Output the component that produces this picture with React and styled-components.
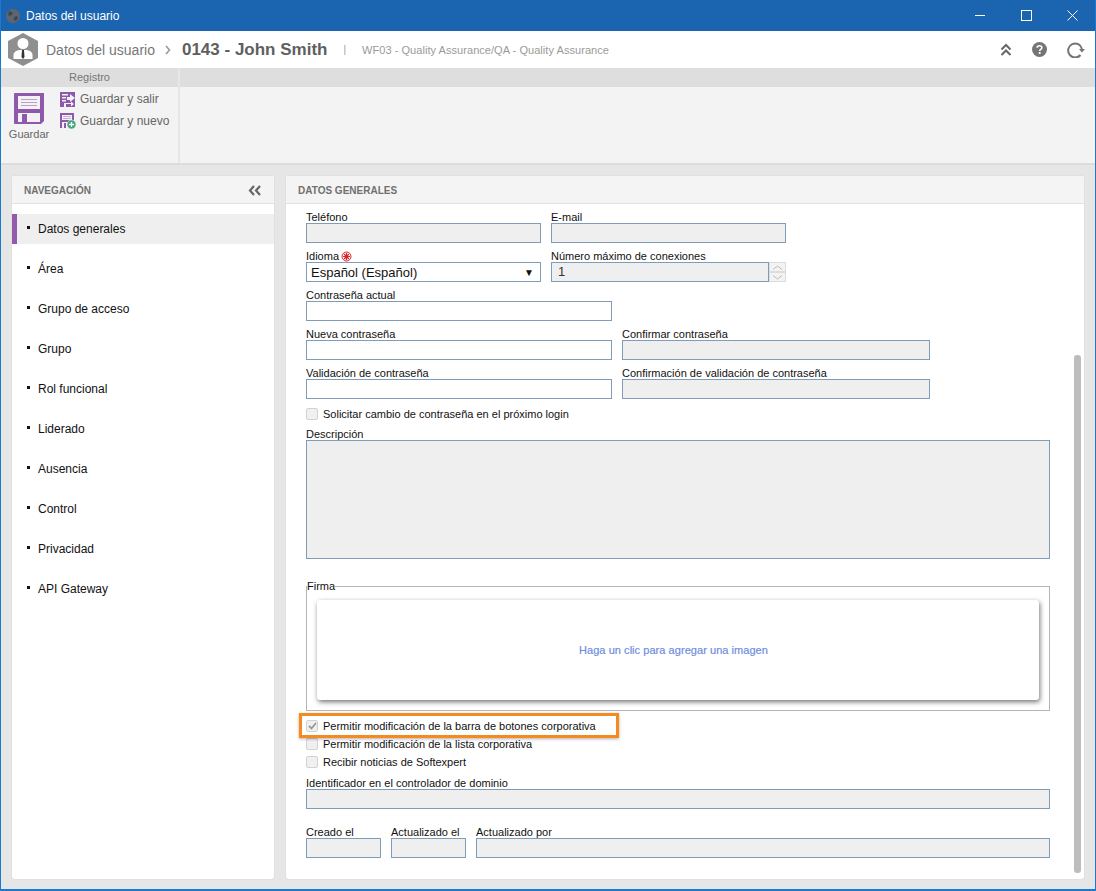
import React from 'react'
import styled, { createGlobalStyle } from 'styled-components'

const GlobalStyle = createGlobalStyle`
    html, body {
        margin: 0;
        padding: 0;
        background: #e6e6e6;
    }
    body {
        font-family: "Liberation Sans", Arial, sans-serif;
        font-size: 11px;
        color: #111;
    }
`

const navItems = ['Datos generales', 'Área', 'Grupo de acceso', 'Grupo', 'Rol funcional', 'Liderado', 'Ausencia', 'Control', 'Privacidad', 'API Gateway']

const SaveIcon = () => (
    <svg width="30" height="31" viewBox="0 0 30 31">
        <path d="M1 0h29v28l-3 3H1a1 1 0 0 1-1-1V1a1 1 0 0 1 1-1z" fill="#8e59ab" />
        <rect x="4" y="3" width="22" height="13" fill="#f4f1f6" />
        <path d="M7 6.500h16M7 9.500h16M7 12.500h16" stroke="#b9a3c9" strokeWidth="1" />
        <rect x="4" y="20" width="22" height="9" fill="#f4f1f6" />
        <rect x="8" y="21" width="5" height="8" fill="#8e59ab" />
    </svg>
)

const SaveExitIcon = () => (
    <svg width="15" height="15" viewBox="0 0 15 15">
        <path d="M0 0h15v15H0z" fill="#8e59ab" />
        <path d="M2 2h6v1.500H2zM2 5h4v1.500H2zM2 8h4v1.500H2z" fill="#f4f1f6" />
        <path d="M7 5h3V2l5 4-5 4V8H7z" fill="#f4f1f6" />
        <path d="M4 15v-4h7v-1.500l3 2.500-3 2.500V12H6v3z" fill="#f4f1f6" />
    </svg>
)

const SaveNewIcon = () => (
    <svg width="15" height="16" viewBox="0 0 15 16" overflow="visible">
        <path d="M0 0h14v15H0z" fill="#8e59ab" />
        <rect x="2" y="2" width="10" height="5" fill="#f4f1f6" />
        <path d="M3 3.500h8M3 5.500h8" stroke="#b9a3c9" strokeWidth="0.800" />
        <rect x="2" y="9" width="8" height="6" fill="#f4f1f6" />
        <rect x="4" y="10" width="2" height="5" fill="#8e59ab" />
        <circle cx="11.500" cy="11.500" r="4.500" fill="#3ea878" stroke="#f3f3f3" strokeWidth="0.600" />
        <path d="M11.500 9v5M9 11.500h5" stroke="#fff" strokeWidth="1.300" />
    </svg>
)

const UserBadge = () => (
    <svg width="30" height="33" viewBox="0 0 30 33">
        <path d="M15 0l15 8v17l-15 8-15-8V8z" fill="#8f8f8f" />
        <circle cx="15" cy="10.500" r="5.500" fill="#fff" />
        <path d="M5.500 26v-4c0-3 3-4.500 6-5h7c3 .5 6 2 6 5v4z" fill="#fff" />
        <path d="M14 17h2l.5 7-1.500 2-1.500-2z" fill="#333" />
    </svg>
)

const App = () => (
    <Frame>
        <GlobalStyle />
        <TitleBar>
            <TitleLeft>
                <svg width="14" height="14" viewBox="0 0 14 14">
                    <circle cx="7" cy="7" r="7" fill="#5d6670" />
                    <path d="M3 2l3 1 1 2-3 2-2-1zM8 8l3-1 1 2-2 3-2-1z" fill="#3f4750" />
                </svg>
                Datos del usuario
            </TitleLeft>
            <WindowButtons>
                <svg width="11" height="11" viewBox="0 0 11 11"><path d="M0 5.500h10" stroke="#fff" strokeWidth="1" /></svg>
                <svg width="11" height="11" viewBox="0 0 11 11"><rect x="0.500" y="0.500" width="10" height="10" fill="none" stroke="#fff" strokeWidth="1" /></svg>
                <svg width="11" height="11" viewBox="0 0 11 11"><path d="M0.500 0.500l10 10M10.500 0.500l-10 10" stroke="#fff" strokeWidth="1" /></svg>
            </WindowButtons>
        </TitleBar>

        <HeaderBar>
            <UserBadge />
            <Crumb>Datos del usuario</Crumb>
            <CrumbArrow>
                <svg width="6" height="10" viewBox="0 0 6 10"><path d="M1 1l3.500 4L1 9" fill="none" stroke="#999" strokeWidth="1.600" /></svg>
            </CrumbArrow>
            <RecordTitle>0143 - John Smith</RecordTitle>
            <Pipe>|</Pipe>
            <RecordPath>WF03 - Quality Assurance/QA - Quality Assurance</RecordPath>
            <HeaderTools>
                <svg width="12" height="14" viewBox="0 0 12 14"><path d="M1.500 6.500L6 2l4.500 4.500M1.500 12L6 7.500l4.500 4.500" fill="none" stroke="#666" strokeWidth="2" /></svg>
                <svg width="15" height="15" viewBox="0 0 16 16">
                    <circle cx="8" cy="8" r="8" fill="#757575" />
                    <path d="M5.500 6.200C5.500 4.600 6.700 4 8 4s2.500.7 2.500 2.100c0 1.800-2.300 1.800-2.300 3.500" fill="none" stroke="#fff" strokeWidth="1.700" />
                    <rect x="7.200" y="10.700" width="2" height="2" fill="#fff" />
                </svg>
                <svg width="18" height="16" viewBox="0 0 18 16">
                    <path d="M13.500 13A7 7 0 1 1 15 7" fill="none" stroke="#757575" strokeWidth="2" />
                    <path d="M12 7h6l-3 3.500z" fill="#757575" />
                </svg>
            </HeaderTools>
        </HeaderBar>

        <Ribbon>
            <RibbonGroup>
                <RibbonGroupTitle>Registro</RibbonGroupTitle>
                <RibbonGroupBody>
                    <BigAction>
                        <SaveIcon />
                        <span>Guardar</span>
                    </BigAction>
                    <SmallActions>
                        <SmallAction><SaveExitIcon />Guardar y salir</SmallAction>
                        <SmallAction><SaveNewIcon />Guardar y nuevo</SmallAction>
                    </SmallActions>
                </RibbonGroupBody>
            </RibbonGroup>
            <RibbonRest>
                <RibbonGroupTitle />
            </RibbonRest>
        </Ribbon>

        <Workspace>
            <NavPanel>
                <PanelHead>
                    <PanelTitle>NAVEGACIÓN</PanelTitle>
                    <svg width="13" height="11" viewBox="0 0 13 11"><path d="M6 1L2 5.500 6 10M12 1L8 5.500l4 4.500" fill="none" stroke="#666" strokeWidth="2.200" /></svg>
                </PanelHead>
                <NavList>
                    {navItems.map((item, i) => (
                        <NavItem key={item} $active={i === 0}>{item}</NavItem>
                    ))}
                </NavList>
            </NavPanel>

            <FormPanel>
                <PanelHead>
                    <PanelTitle>DATOS GENERALES</PanelTitle>
                </PanelHead>
                <FormBody>
                    <Scrollbar />
                    <Row>
                        <Field $w={235}><Label>Teléfono</Label><Input $off /></Field>
                        <Field $w={235}><Label>E-mail</Label><Input $off /></Field>
                    </Row>
                    <Row>
                        <Field $w={235}>
                            <Label>
                                Idioma
                                <svg width="11" height="11" viewBox="0 0 11 11">
                                    <circle cx="5.500" cy="5.500" r="4.500" fill="none" stroke="#d8232a" strokeWidth="1" />
                                    <path d="M5.500 2v7M2 5.500h7M3 3l5 5M8 3l-5 5" stroke="#d8232a" strokeWidth="1.200" />
                                </svg>
                            </Label>
                            <SelectBox>Español (Español)<SelectCaret>▼</SelectCaret></SelectBox>
                        </Field>
                        <Field $w={235}>
                            <Label>Número máximo de conexiones</Label>
                            <SpinRow>
                                <SpinValue>1</SpinValue>
                                <SpinButtons>
                                    <SpinButton><svg width="11" height="5" viewBox="0 0 11 5"><path d="M1 4.500L5.500 1 10 4.500" fill="none" stroke="#bbb" /></svg></SpinButton>
                                    <SpinButton><svg width="11" height="5" viewBox="0 0 11 5"><path d="M1 .5L5.500 4 10 .5" fill="none" stroke="#bbb" /></svg></SpinButton>
                                </SpinButtons>
                            </SpinRow>
                        </Field>
                    </Row>
                    <Row>
                        <Field $w={306}><Label>Contraseña actual</Label><Input /></Field>
                    </Row>
                    <Row>
                        <Field $w={306}><Label>Nueva contraseña</Label><Input /></Field>
                        <Field $w={308}><Label>Confirmar contraseña</Label><Input $off /></Field>
                    </Row>
                    <Row>
                        <Field $w={306}><Label>Validación de contraseña</Label><Input /></Field>
                        <Field $w={308}><Label>Confirmación de validación de contraseña</Label><Input $off /></Field>
                    </Row>
                    <CheckRow $top={6}><CheckBox />Solicitar cambio de contraseña en el próximo login</CheckRow>
                    <DescriptionField>
                        <Label>Descripción</Label>
                        <TextArea />
                    </DescriptionField>
                    <SignatureBox>
                        <legend>Firma</legend>
                        <SignatureCard>Haga un clic para agregar una imagen</SignatureCard>
                    </SignatureBox>
                    <CheckStack>
                        <Highlight />
                        <CheckRow><CheckBox>
                            <svg width="9" height="8" viewBox="0 0 9 8"><path d="M1 4l2.500 2.500L8 1" fill="none" stroke="#999" strokeWidth="1.800" /></svg>
                        </CheckBox>Permitir modificación de la barra de botones corporativa</CheckRow>
                        <CheckRow><CheckBox />Permitir modificación de la lista corporativa</CheckRow>
                        <CheckRow><CheckBox />Recibir noticias de Softexpert</CheckRow>
                    </CheckStack>
                    <DomainField>
                        <Label>Identificador en el controlador de dominio</Label>
                        <Input $off />
                    </DomainField>
                    <AuditRow>
                        <Field $w={75}><Label>Creado el</Label><Input $off /></Field>
                        <Field $w={75}><Label>Actualizado el</Label><Input $off /></Field>
                        <Field $w={574}><Label>Actualizado por</Label><Input $off /></Field>
                    </AuditRow>
                </FormBody>
            </FormPanel>
        </Workspace>
    </Frame>
)

export default App


const Frame = styled.div`
    width: 1096px;
    height: 891px;
    box-sizing: border-box;
    border: solid #1a7ad0;
    border-width: 0 1px 2px 1px;
    background: #e6e6e6;
    display: flex;
    flex-direction: column;
    overflow: hidden;
`
const TitleBar = styled.div`
    height: 31px;
    flex: none;
    background: #1a64b0;
    margin: 0 -1px;
    display: flex;
    align-items: center;
    justify-content: space-between;
    color: #fff;
    font-size: 12px;
`
const TitleLeft = styled.div`
    display: flex;
    align-items: center;
    gap: 6px;
    padding-left: 6px;
`
const WindowButtons = styled.div`
    display: flex;
    gap: 35px;
    padding-right: 18px;
    align-items: center;
`
const HeaderBar = styled.div`
    height: 37px;
    flex: none;
    background: #fff;
    display: flex;
    align-items: center;
    padding-left: 7px;
`
const Crumb = styled.div`
    font-size: 14px;
    color: #777;
    margin-left: 8px;
`
const CrumbArrow = styled.div`
    margin: 0 11px 0 10px;
    display: flex;
`
const RecordTitle = styled.div`
    font-size: 17px;
    font-weight: bold;
    color: #5f5f5f;
`
const Pipe = styled.div`
    margin: 0 16px 0 16px;
    color: #999;
    font-size: 10px;
`
const RecordPath = styled.div`
    color: #9a9a9a;
    font-size: 11px;
    letter-spacing: 0.05px;
`
const HeaderTools = styled.div`
    margin-left: auto;
    padding-right: 10px;
    display: flex;
    align-items: center;
    gap: 20px;
`
const Ribbon = styled.div`
    height: 97px;
    flex: none;
    display: flex;
    background: #f3f3f3;
    border-bottom: 2px solid #dcdcdc;
    box-sizing: border-box;
`
const RibbonGroup = styled.div`
    width: 177px;
    flex: none;
    border-right: 2px solid #e6e6e6;
    display: flex;
    flex-direction: column;
`
const RibbonRest = styled.div`
    flex: 1;
`
const RibbonGroupTitle = styled.div`
    height: 19px;
    background: #dedede;
    color: #777;
    font-size: 11px;
    text-align: center;
    line-height: 19px;
`
const RibbonGroupBody = styled.div`
    display: flex;
    flex: 1;
    padding: 4px 0 0 8px;
    gap: 11px;
    color: #666;
`
const BigAction = styled.div`
    display: flex;
    flex-direction: column;
    align-items: center;
    gap: 4px;
    padding-top: 2px;
    width: 40px;
    font-size: 11px;
`
const SmallActions = styled.div`
    display: flex;
    flex-direction: column;
    gap: 6px;
    font-size: 12px;
`
const SmallAction = styled.div`
    display: flex;
    align-items: center;
    gap: 5px;
    height: 16px;
`
const Workspace = styled.div`
    flex: 1;
    display: flex;
    gap: 12px;
    padding: 11px 11px 10px 11px;
    min-height: 0;
`
const Panel = styled.div`
    background: #fff;
    border-radius: 2px;
    box-shadow: 0 0 1px rgba(0, 0, 0, 0.25);
    display: flex;
    flex-direction: column;
`
const NavPanel = styled(Panel)`
    width: 262px;
    flex: none;
`
const FormPanel = styled(Panel)`
    flex: 1;
    min-width: 0;
`
const PanelHead = styled.div`
    height: 28px;
    box-sizing: border-box;
    flex: none;
    background: #f4f4f4;
    border-bottom: 1px solid #e2e2e2;
    display: flex;
    align-items: center;
    justify-content: space-between;
    padding: 2px 13px 0 12px;
`
const PanelTitle = styled.div`
    font-size: 10px;
    font-weight: bold;
    color: #707070;
`
const NavList = styled.div`
    padding-top: 10px;
    display: flex;
    flex-direction: column;
    gap: 10px;
`
const NavItem = styled.div`
    height: 30px;
    display: flex;
    align-items: center;
    position: relative;
    font-size: 12px;
    color: #111;
    border-left: 5px solid ${props => props.$active ? '#9259ad' : 'transparent'};
    padding-left: 21px;
    padding-bottom: 1px;
    box-sizing: border-box;
    background: ${props => props.$active ? '#efefef' : 'transparent'};
    &::before {
        content: "";
        position: absolute;
        left: 10px;
        top: 12px;
        width: 3px;
        height: 3px;
        background: #111;
    }
`
const FormBody = styled.div`
    position: relative;
    flex: 1;
    padding-left: 20px;
`
const Scrollbar = styled.div`
    position: absolute;
    top: 151px;
    right: 3px;
    width: 7px;
    height: 518px;
    border-radius: 3px;
    background: #bdbdbd;
`
const Row = styled.div`
    display: flex;
    gap: 10px;
`
const Field = styled.div`
    width: ${props => props.$w}px;
    height: 39px;
    display: flex;
    flex-direction: column;
    justify-content: flex-end;
`
const Label = styled.div`
    height: 13px;
    line-height: 13px;
    margin-bottom: -1px;
    font-size: 11px;
    color: #111;
    display: flex;
    align-items: center;
    gap: 2px;
    white-space: nowrap;
`
const Input = styled.div`
    height: 20px;
    box-sizing: border-box;
    border: 1px solid #7f9db9;
    background: ${props => props.$off ? '#efefef' : '#fff'};
`
const SelectBox = styled(Input)`
    display: flex;
    align-items: center;
    justify-content: space-between;
    padding: 0 6px 0 4px;
    font-size: 13px;
`
const SelectCaret = styled.span`
    font-size: 10px;
`
const SpinRow = styled.div`
    display: flex;
    height: 20px;
`
const SpinValue = styled(Input)`
    flex: 1;
    background: #efefef;
    font-size: 13px;
    color: #333;
    padding-left: 6px;
    line-height: 18px;
`
const SpinButtons = styled.div`
    width: 17px;
    display: flex;
    flex-direction: column;
`
const SpinButton = styled.div`
    flex: 1;
    border: 1px solid #ddd;
    background: #f3f3f3;
    display: flex;
    align-items: center;
    justify-content: center;
`
const CheckRow = styled.div`
    height: 18px;
    margin-top: ${props => props.$top || 0}px;
    display: flex;
    align-items: center;
    gap: 5px;
    font-size: 11px;
    color: #111;
`
const CheckBox = styled.div`
    width: 12px;
    height: 12px;
    box-sizing: border-box;
    border: 1px solid #d3d3d3;
    border-radius: 2px;
    background: #f0f0f0;
    display: flex;
    align-items: center;
    justify-content: center;
`
const DescriptionField = styled.div`
    margin-top: 5px;
    width: 744px;
`
const TextArea = styled(Input)`
    height: 119px;
    background: #efefef;
`
const SignatureBox = styled.fieldset`
    width: 744px;
    height: 131px;
    box-sizing: border-box;
    margin: 21px 0 0;
    padding: 7px 10px 0;
    border: 1px solid #b5b5b5;
    legend {
        padding: 0;
        margin-left: -10px;
        font-size: 11px;
        line-height: 13px;
        height: 13px;
        color: #111;
    }
`
const SignatureCard = styled.div`
    height: 100px;
    background: #fff;
    border-radius: 3px;
    box-shadow: 1px 2px 5px rgba(0, 0, 0, 0.55);
    display: flex;
    align-items: center;
    justify-content: center;
    padding-right: 9px;
    color: #6f8de0;
    font-size: 11px;
    letter-spacing: 0.05px;
    -webkit-text-stroke: 0.2px #6f8de0;
`
const CheckStack = styled.div`
    position: relative;
    margin-top: 6px;
`
const Highlight = styled.div`
    position: absolute;
    left: -7px;
    top: -4px;
    width: 320px;
    height: 25px;
    box-sizing: border-box;
    border: 3px solid #f58a1f;
    box-shadow: 0 1px 3px rgba(0, 0, 0, 0.3);
    pointer-events: none;
`
const DomainField = styled.div`
    width: 744px;
    margin-top: 6px;
`
const AuditRow = styled.div`
    display: flex;
    gap: 10px;
    margin-top: 10px;
`
